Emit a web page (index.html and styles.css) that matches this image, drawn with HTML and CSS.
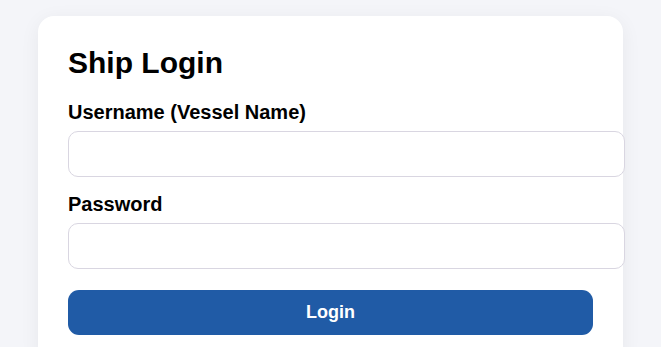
FILE: index.html
```html
<!DOCTYPE html>
<html lang="en">
<head>
    <meta charset="UTF-8">
    <meta name="viewport" content="width=device-width, initial-scale=1.0">
    <title>Ship Login</title>
    <link rel="stylesheet" href="styles.css">
</head>
<body>

    <div class="login-box">
        <h2>Ship Login</h2>
        <form>
            <div class="campo">
                <label for="username">Username (Vessel Name)</label>
                <input type="text" id="username">
            </div>
            <div class="campo">
                <label for="password">Password</label>
                <input type="password" id="password">
            </div>
            <button type="submit" class="entrar">Login</button>
        </form>
    </div>

</body>
</html>
```

FILE: styles.css
```css
body {
    font-family: 'Liberation Sans', Arial, sans-serif;
    background-color: #f4f5f9;
    margin: 0;
    padding: 16px 38px;
}
.login-box {
    background-color: #ffffff;
    width: 525px;
    padding: 30px;
    border-radius: 16px;
    box-shadow: 0 4px 20px rgba(0, 0, 0, 0.06);
}
.login-box h2 {
    margin: 0 0 21px 0;
    font-size: 30px;
    color: #000;
}
.campo {
    margin-bottom: 16px;
}
.campo label {
    display: block;
    font-weight: bold;
    font-size: 20px;
    margin-bottom: 7px;
    color: #000;
}
.campo input {
    width: 100%;
    height: 44px;
    padding: 0 15px;
    font-size: 14px;
    border: 1px solid #d9d6e1;
    border-radius: 10px;
    background-color: #fff;
}
button.entrar {
    width: 100%;
    margin-top: 5px;
    padding: 12px;
    font-family: 'Liberation Sans', Arial, sans-serif;
    font-size: 18px;
    font-weight: bold;
    color: #fff;
    background-color: #205ba6;
    border: none;
    border-radius: 11px;
    cursor: pointer;
}
```
